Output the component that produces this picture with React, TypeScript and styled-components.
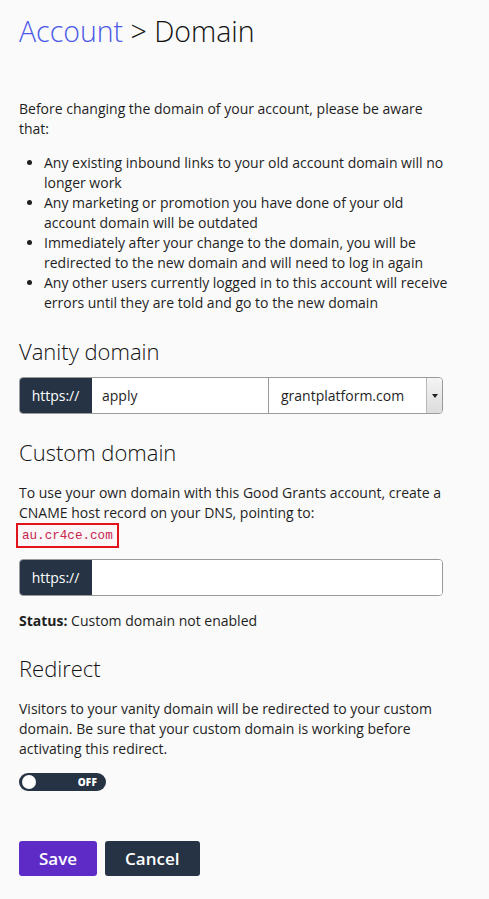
import React from "react";
import styled, { createGlobalStyle } from "styled-components";

const GlobalStyle = createGlobalStyle`
  html, body {
    margin: 0;
    padding: 0;
    background: #fafafa;
  }
  body {
    font-family: "Open Sans", "Liberation Sans", sans-serif;
    color: #1f1f1f;
  }
`;

const bullets = [
  "Any existing inbound links to your old account domain will no longer work",
  "Any marketing or promotion you have done of your old account domain will be outdated",
  "Immediately after your change to the domain, you will be redirected to the new domain and will need to log in again",
  "Any other users currently logged in to this account will receive errors until they are told and go to the new domain",
];

export default function App() {
  return (
    <>
      <GlobalStyle />
      <Page>
        <Title>
          <Crumb href="#">Account</Crumb> &gt; Domain
        </Title>

        <Text $top={50}>
          Before changing the domain of your account, please be aware that:
        </Text>
        <Bullets>
          {bullets.map((b) => (
            <li key={b}>{b}</li>
          ))}
        </Bullets>

        <Heading>Vanity domain</Heading>
        <InputGroup>
          <Addon>https://</Addon>
          <Field $basis={176} defaultValue="apply" />
          <Select>
            <span>grantplatform.com</span>
            <Caret>
              <svg width="6" height="4" viewBox="0 0 6 4">
                <path d="M0 0h6L3 4z" fill="#222" />
              </svg>
            </Caret>
          </Select>
        </InputGroup>

        <Heading>Custom domain</Heading>
        <Text $top={16}>
          To use your own domain with this Good Grants account, create a CNAME
          host record on your DNS, pointing to:
          <br />
          <Code>au.cr4ce.com</Code>
        </Text>
        <InputGroup $top={11}>
          <Addon>https://</Addon>
          <Field />
        </InputGroup>
        <Text $top={15}>
          <strong>Status:</strong> Custom domain not enabled
        </Text>

        <Heading $top={22}>Redirect</Heading>
        <Text $top={16}>
          Visitors to your vanity domain will be redirected to your custom
          domain. Be sure that your custom domain is working before activating
          this redirect.
        </Text>
        <Toggle>
          <Knob />
          <ToggleLabel>OFF</ToggleLabel>
        </Toggle>

        <Actions>
          <Button $variant="primary">Save</Button>
          <Button>Cancel</Button>
        </Actions>
      </Page>
    </>
  );
}

const Page = styled.div`
  padding: 13px 19px 24px 19px;
  width: 432px;
  box-sizing: content-box;
  min-height: 862px;
`;

const Title = styled.h1`
  margin: 0;
  font-size: 28.5px;
  line-height: 36px;
  font-weight: 300;
  color: #111;
`;

const Crumb = styled.a`
  color: #4a58e8;
  text-decoration: none;
`;

const Text = styled.p<{ $top?: number }>`
  margin: ${({ $top }) => $top ?? 0}px 0 0 0;
  font-size: 14px;
  line-height: 20px;
  color: #1f1f1f;

  strong {
    font-weight: 700;
  }
`;

const Bullets = styled.ul`
  margin: 14px 0 0 0;
  padding-left: 25px;
  font-size: 14px;
  line-height: 20px;
`;

const Heading = styled.h2<{ $top?: number }>`
  margin: ${({ $top }) => $top ?? 23}px 0 0 0;
  font-size: 22px;
  line-height: 30px;
  font-weight: 300;
  color: #111;
`;

const InputGroup = styled.div<{ $top?: number }>`
  display: flex;
  width: 424px;
  height: 37px;
  margin-top: ${({ $top }) => $top ?? 11}px;
  border-radius: 4px;
  overflow: hidden;
  border: 1px solid #9a9a9a;
  box-sizing: border-box;
  background: #fff;
`;

const Addon = styled.div`
  flex: 0 0 73px;
  display: flex;
  align-items: center;
  justify-content: center;
  background: #253344;
  color: #fff;
  font-size: 14px;
  margin: -1px 0 -1px -1px;
`;

const Field = styled.input<{ $basis?: number }>`
  ${({ $basis }) => ($basis ? `flex: 0 0 ${$basis}px;` : "flex: 1;")}
  box-sizing: border-box;
  min-width: 0;
  border: none;
  outline: none;
  padding: 0 10px;
  font-family: inherit;
  font-size: 14px;
  color: #1f1f1f;
  background: #fff;
`;

const Select = styled.div`
  flex: 1;
  display: flex;
  align-items: center;
  border-left: 1px solid #9a9a9a;
  font-size: 14px;
  color: #1f1f1f;

  span {
    flex: 1;
    padding-left: 12px;
  }
`;

const Caret = styled.div`
  width: 15px;
  align-self: stretch;
  display: flex;
  align-items: center;
  justify-content: center;
  border-left: 1px solid #b8b8b8;
  background: linear-gradient(#f4f4f4, #dcdcdc);
`;

const Code = styled.code`
  display: inline-block;
  margin: 0 0 0 -3px;
  padding: 2px 4px 1px 4px;
  border: 2px solid #e3131b;
  background: #fbf6f7;
  color: #c7254e;
  font-family: "Liberation Mono", "DejaVu Sans Mono", monospace;
  font-size: 12.6px;
  line-height: 18px;
  vertical-align: middle;
`;

const Toggle = styled.div`
  margin-top: 14px;
  width: 87px;
  height: 18px;
  border-radius: 9px;
  background: #253344;
  display: flex;
  align-items: center;
  padding: 0 3px;
  box-sizing: border-box;
`;

const Knob = styled.div`
  width: 14px;
  height: 14px;
  border-radius: 50%;
  background: #fff;
`;

const ToggleLabel = styled.span`
  margin-left: auto;
  margin-right: 6px;
  color: #fff;
  font-size: 10px;
  font-weight: 800;
  letter-spacing: 0.2px;
`;

const Actions = styled.div`
  display: flex;
  gap: 8px;
  margin-top: 50px;
`;

const Button = styled.button<{ $variant?: "primary" }>`
  height: 35px;
  padding: 0 20px;
  border: none;
  border-radius: 3px;
  background: ${({ $variant }) => ($variant === "primary" ? "#5e2bc6" : "#253344")};
  color: #fff;
  font-family: "Open Sans", sans-serif;
  font-size: 17px;
  font-weight: 600;
  cursor: pointer;
`;
